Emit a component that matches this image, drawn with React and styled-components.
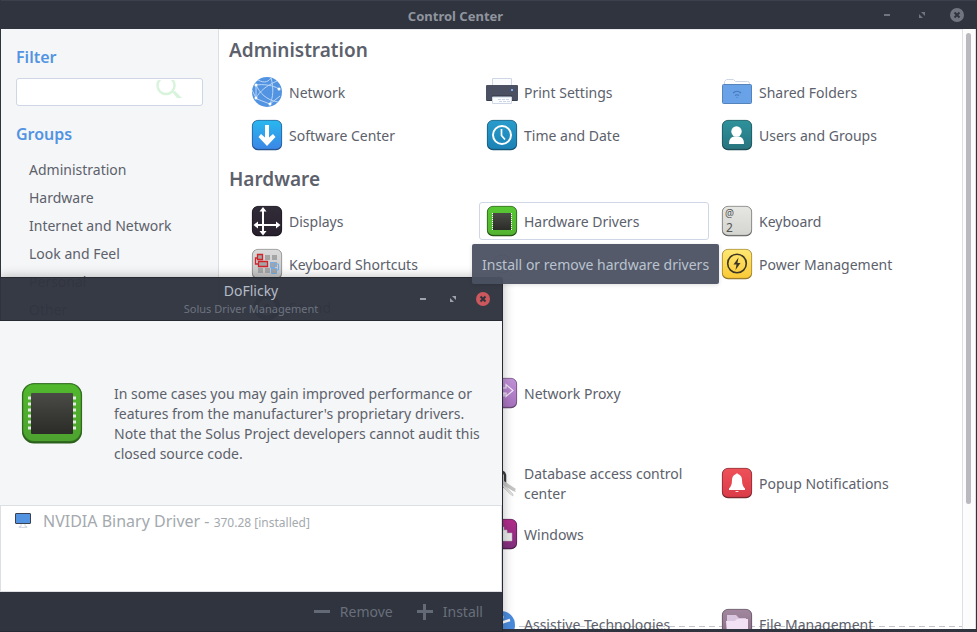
import React from "react";
import styled, { createGlobalStyle } from "styled-components";

const GlobalStyle = createGlobalStyle`
  *, *::before, *::after { box-sizing: border-box; }
  body {
    margin: 0;
    background: #2f343f;
    color: #5c616c;
    font-family: "Noto Sans", "Open Sans", sans-serif;
    font-size: 14px;
    line-height: 20px;
  }
  button, input { font: inherit; color: inherit; }
  h1, h2, p, ul { margin: 0; padding: 0; }
`;

/* ---------- main window ---------- */

const Desktop = styled.div`
  position: relative;
  height: 100vh;
  overflow: hidden;
`;

const MainWindow = styled.main`
  display: flex;
  flex-direction: column;
  height: 100%;
  padding: 0 1px 3px;
  background: #2f343f;
`;

const TitleBar = styled.header`
  display: grid;
  grid-template-columns: 1fr auto;
  align-items: center;
  flex: none;
  height: 29px;
  padding: 0 11px 0 0;
  border-top: 1px solid #3b404c;
`;

const WindowTitle = styled.h1`
  padding: 2px 0 0 31px;
  text-align: center;
  font-size: 13px;
  font-weight: 700;
  color: #90949e;
`;

const WindowButtons = styled.div`
  display: flex;
  gap: ${(p) => p.$gap};
`;

const WindowButton = styled.button`
  display: flex;
  width: 16px;
  height: 16px;
  padding: 0;
  border: 0;
  background: none;
`;

const Body = styled.div`
  display: flex;
  flex: 1;
  min-height: 0;
`;

const Sidebar = styled.aside`
  flex: none;
  width: 218px;
  padding: 18px 15px 0;
  border-right: 1px solid #dcdfe3;
  background: #f5f6f7;
  overflow: hidden;
`;

const SideHeading = styled.h2`
  display: block;
  color: #5294e2;
  font-size: 16px;
  line-height: 20px;
  font-weight: 600;
`;

const SearchBox = styled.div`
  display: flex;
  align-items: flex-start;
  height: 28px;
  margin: 11px 0 18px;
  padding: 1px 20px 0 8px;
  border: 1px solid #cfd6e6;
  border-radius: 3px;
  background: #fff;
`;

const SearchInput = styled.input`
  flex: 1;
  min-width: 0;
  height: 24px;
  padding: 0;
  border: 0;
  outline: 0;
  background: none;
`;

const GroupList = styled.ul`
  margin-top: 12px;
  list-style: none;
`;

const GroupButton = styled.button`
  display: block;
  width: 100%;
  height: 28px;
  padding: 0 13px;
  border: 0;
  background: none;
  text-align: left;
`;

const Content = styled.div`
  display: flex;
  flex: 1;
  flex-direction: column;
  gap: 10px;
  min-width: 0;
  padding: 5px 10px 0;
  border-top: 1px solid #ebecee;
  background-color: #fff;
  background-image: linear-gradient(90deg, #c4c6c9 60%, transparent 60%);
  background-repeat: repeat-x;
  background-position: 0 calc(100% - 2px);
  background-size: 10px 1px;
  overflow: hidden;
`;

const Section = styled.section`
  flex: none;
`;

const SectionHeading = styled.h2`
  margin-bottom: 9px;
  padding-top: 1px;
  font-size: 19px;
  line-height: 28px;
  font-weight: 600;
`;

const ItemGrid = styled.div`
  display: grid;
  grid-template-columns: repeat(3, minmax(0, 1fr));
  grid-auto-rows: 1fr;
  gap: 5px;
  padding: 0 8px 0 15px;
`;

const ItemButton = styled.button`
  display: flex;
  grid-column: ${(p) => p.$column};
  align-items: center;
  gap: 6px;
  min-height: 38px;
  padding: 1px 6px;
  border: 1px solid ${(p) => (p.$hovered ? "#cfd6e6" : "transparent")};
  border-radius: 3px;
  background: none;
  text-align: left;

  svg { flex: none; }
`;

const ItemLabel = styled.span`
  padding-top: 2px;
`;

const ScrollTrack = styled.div`
  flex: none;
  width: 14px;
  padding: 4px 4px 0 3px;
  border-left: 1px solid #dcdfe3;
  border-right: 1px solid #dcdfe3;
  background: #fcfcfc;
`;

const ScrollThumb = styled.div`
  height: 79%;
  border-radius: 3px;
  background: #b8babf;
`;

/* ---------- tooltip ---------- */

const Tooltip = styled.div`
  position: absolute;
  left: 472px;
  top: 244px;
  z-index: 3;
  height: 40px;
  padding: 0 10px;
  border-radius: 2px;
  background: rgba(75, 81, 98, 0.95);
  box-shadow: 0 1px 4px rgba(0, 0, 0, 0.12);
  color: #bac3cf;
  line-height: 42px;
  white-space: nowrap;
`;

/* ---------- driver dialog ---------- */

const Dialog = styled.section`
  position: absolute;
  left: 0;
  bottom: 0;
  z-index: 2;
  display: flex;
  flex-direction: column;
  width: 503px;
  height: 355px;
  border-right: 1px solid #262a33;
  border-radius: 0 3px 0 0;
  box-shadow: 0 0 12px rgba(0, 0, 0, 0.28);
`;

const DialogBar = styled.header`
  display: grid;
  grid-template-columns: 1fr auto;
  align-items: center;
  flex: none;
  height: 44px;
  padding-right: 11px;
  border-top: 1px solid #262a33;
  border-bottom: 1px solid #262a33;
  border-radius: 0 3px 0 0;
  background: rgba(47, 52, 63, 0.97);
`;

const DialogTitles = styled.div`
  padding: 2px 0 0 87px;
  text-align: center;
`;

const DialogTitle = styled.h2`
  color: #b3bac5;
  font-size: 14px;
  line-height: 18px;
  font-weight: 400;
`;

const DialogSubtitle = styled.p`
  color: #6d7480;
  font-size: 11px;
  line-height: 18px;
`;

const Notice = styled.div`
  display: flex;
  flex: none;
  align-items: center;
  gap: 30px;
  height: 184px;
  padding: 0 12px 0 20px;
  background: #f5f6f7;

  svg { flex: none; }
`;

const NoticeText = styled.p`
  padding-top: 22px;
`;

const DriverList = styled.ul`
  flex: 1;
  border: 1px solid #dcdfe3;
  background: #fff;
  list-style: none;
`;

const DriverRow = styled.li`
  display: flex;
  align-items: center;
  gap: 11px;
  height: 30px;
  padding: 0 13px;
  color: #a4a9ae;
  font-size: 16px;

  span { padding-top: 2px; }
  small { font-size: 12px; }
`;

const DialogFooter = styled.footer`
  display: flex;
  flex: none;
  justify-content: flex-end;
  gap: 24px;
  height: 40px;
  padding-right: 19px;
  border-bottom: 1px solid #262a33;
  background: #2f343f;
`;

const FooterButton = styled.button`
  display: flex;
  align-items: center;
  gap: 10px;
  padding: 0;
  border: 0;
  background: none;
  color: #696f7a;
`;

/* ---------- icons ---------- */

function Tile({ id, from, to, edge, children, size = 32 }) {
  return (
    <svg width={size} height={size} viewBox="0 0 32 32" aria-hidden="true">
      <defs>
        <linearGradient id={id} x1="0" y1="0" x2="0" y2="1">
          <stop offset="0" stopColor={from} />
          <stop offset="1" stopColor={to} />
        </linearGradient>
      </defs>
      <rect x="1" y="1.200" width="30" height="30" rx="6" fill={edge} />
      <rect x="1.300" y="1.300" width="29.400" height="29" rx="5.800" fill={`url(#${id})`} stroke={edge} strokeWidth="0.700" strokeOpacity="0.700" />
      {children}
    </svg>
  );
}

const NetworkIcon = () => (
  <svg width="32" height="32" viewBox="0 0 32 32" aria-hidden="true">
    <circle cx="16" cy="16" r="15" fill="#5294e2" />
    <g fill="none" stroke="#bcd6f5" strokeWidth="1">
      <path d="M5 9C12 8 22 9 28 13M5 22C9 15 15 10 26 5M5 9C9 17 15 24 27 26M20 2C23 12 22 22 19 28M5 9L5 22M6 23L19 28L29 20M7 4C14 8 18 5 20 2M1 14L5 22" />
    </g>
    <g fill="#fff">
      <circle cx="5" cy="9" r="1.500" /><circle cx="28" cy="13" r="1.500" />
      <circle cx="5" cy="22" r="1.500" /><circle cx="19" cy="28" r="1.500" />
    </g>
  </svg>
);

const SoftwareIcon = () => (
  <Tile id="software" from="#28b8ef" to="#3c86e6" edge="#234e86">
    <path d="M14 6h4v12.500l4-3.500 2.500 3L16 27l-8.500-9 2.500-3 4 3.500z" fill="#fff" />
  </Tile>
);

const PrinterIcon = () => (
  <svg width="32" height="32" viewBox="0 0 32 32" aria-hidden="true">
    <path d="M6.500 9V2.500h19V9" fill="#fbfcfd" stroke="#cfd6e6" />
    <rect y="9" width="32" height="16" rx="1" fill="#4b5162" />
    <path d="M1 24.500h30" stroke="#393e4b" />
    <rect x="25" y="13" width="2" height="2" fill="#7caeea" />
    <path d="M6 20h20" stroke="#2f343f" />
    <path d="M6.500 21v6.500h19V21z" fill="#fbfcfd" stroke="#cfd6e6" />
    <path d="M12 23.500h12M13 25.500h11" stroke="#cfd6e6" strokeDasharray="3 1" />
  </svg>
);

const ClockIcon = () => (
  <Tile id="clock" from="#289ccc" to="#1b82b5" edge="#17506e">
    <circle cx="16" cy="16" r="9" fill="none" stroke="#fff" strokeWidth="2" />
    <path d="M15.500 10v6.500l3.500 4" fill="none" stroke="#fff" strokeWidth="1.700" />
  </Tile>
);

const SharedIcon = () => (
  <svg width="32" height="32" viewBox="0 0 32 32" aria-hidden="true">
    <path d="M3.500 9V5.500L5.500 3.500h7l2 2h12q2 0 2 2V9" fill="#fdfdfe" stroke="#cfd6e6" />
    <rect x="1.500" y="8.500" width="29" height="19" rx="1" fill="#6aa2e8" stroke="#5584bd" />
    <path d="M12 17q4-3.500 8 0M14 19.500q2-1.500 4 0" fill="none" stroke="#4679ba" strokeWidth="1.200" />
    <path d="M15 21h2l-1 1z" fill="#4679ba" />
  </svg>
);

const UsersIcon = () => (
  <Tile id="users" from="#2e929b" to="#27747f" edge="#1c4a50">
    <circle cx="15.500" cy="12.500" r="5.200" fill="#fff" />
    <path d="M8 25q0-7 5-7.500h5q5 .5 5 7.500z" fill="#fff" />
  </Tile>
);

const DisplaysIcon = () => (
  <Tile id="displays" from="#302c38" to="#29212e" edge="#1a171f">
    <path d="M12 5v23M5 20h23" stroke="#fff" strokeWidth="2" />
    <path d="M12 2l3.500 4.500h-7zM12 30.500l3.500-4.500h-7zM2.500 20l4.500-3.500v7zM29.500 20l-4.500-3.500v7z" fill="#fff" />
  </Tile>
);

const ShortcutsIcon = () => (
  <Tile id="shortcuts" from="#dadada" to="#c6c6c6" edge="#7d7d7d">
    <path d="M7 7h5v5H7zM14 7h5v5h-5zM21 7h5v5h-5zM8 14h9v5H8zM19 14h7v5h-7zM7 20h5v5H7zM14 20h5v5h-5zM20 20h5v5h-5z" fill="#a5a5a5" />
    <path d="M6.500 6.500h5v5h-5zM7.500 13.500h9v5h-9zM6.500 10H4.500v6h3" fill="none" stroke="#d2232b" strokeWidth="1.300" />
    <path d="M19.500 14.500h4v5h-4zM20.500 20.500h5v5h-5zM23.500 16h4v6h-2" fill="none" stroke="#72ace9" />
  </Tile>
);

const SoundIcon = () => (
  <svg width="32" height="32" viewBox="0 0 32 32" aria-hidden="true">
    <circle cx="16" cy="16" r="11" fill="none" stroke="#5c616c" strokeWidth="5" />
    <circle cx="16" cy="16" r="3" fill="#5c616c" />
  </svg>
);

const MouseIcon = () => (
  <svg width="32" height="32" viewBox="0 0 32 32" aria-hidden="true">
    <circle cx="16" cy="16" r="9" fill="none" stroke="#aaaeb6" />
    <path d="M16 11v5" stroke="#aaaeb6" strokeWidth="2" />
  </svg>
);

const PINS = [8, 11, 14, 17, 20, 23];

const LargeChipIcon = () => (
  <Tile id="chip-large" from="#51b92d" to="#4da22f" edge="#2c611c" size={64}>
    <linearGradient id="chip-large-core" x1="0" y1="0" x2="0" y2="1">
      <stop offset="0" stopColor="#4a4a47" />
      <stop offset="1" stopColor="#2b2c27" />
    </linearGradient>
    {PINS.map((y) => (
      <path key={y} d={`M4 ${y + 0.5}h24`} stroke="#e1eedd" strokeWidth="1.500" />
    ))}
    <rect x="5.500" y="6" width="21" height="20.500" rx="0.500" fill="url(#chip-large-core)" />
  </Tile>
);

const SmallChipIcon = () => (
  <Tile id="chip" from="#58c833" to="#53b331" edge="#1f4a12">
    <linearGradient id="chip-core" x1="0" y1="0" x2="0" y2="1">
      <stop offset="0" stopColor="#4a4a47" />
      <stop offset="1" stopColor="#2b2c27" />
    </linearGradient>
    <path d="M6.500 8v17M25.500 8v17" stroke="#fff" strokeDasharray="1 1" />
    <rect x="7" y="8" width="18" height="17" fill="url(#chip-core)" />
  </Tile>
);

const KeyboardIcon = () => (
  <Tile id="keyboard" from="#e6e6e2" to="#d4d4d0" edge="#60615f">
    <text x="4" y="12" fontSize="10" fill="#555654">@</text>
    <text x="5" y="27" fontSize="12" fill="#555654">2</text>
  </Tile>
);

const PowerIcon = () => (
  <Tile id="power" from="#ffe873" to="#f9c936" edge="#8c722a">
    <circle cx="16" cy="15.500" r="9.300" fill="none" stroke="#3c3727" strokeWidth="1.600" />
    <path d="M17.500 9.500l-5 7h3l-1 5.500 5-7h-3z" fill="#3c3727" />
  </Tile>
);

const ProxyIcon = () => (
  <Tile id="proxy" from="#c293d8" to="#a671bd" edge="#5f4469">
    <path d="M5 11h15V7.500l7 6-7 6V16H5" fill="none" stroke="#f4e9f8" strokeWidth="1.200" />
    <path d="M18 16v3.500" fill="none" stroke="#f4e9f8" strokeWidth="1.200" />
  </Tile>
);

const KeysIcon = () => (
  <svg width="32" height="32" viewBox="0 0 32 32" aria-hidden="true">
    <path d="M10 5q8-2 9 3v10q-2 3-6 2" fill="none" stroke="#3a3c3d" strokeWidth="2.500" />
    <path d="M18 14l12 8-1 1 1 2-3-1-10-6z" fill="#c4c5c3" />
    <path d="M17 17l10 10v2l-3-2-9-9z" fill="#e0e0de" stroke="#bbb" strokeWidth="0.500" />
  </svg>
);

const BellIcon = () => (
  <Tile id="bell" from="#ef5159" to="#da3b47" edge="#6f252b">
    <path d="M15 7q1-1.500 2 0 4 1.500 4 6 0 6 3 8.500v1.500H8v-1.500Q11 19 11 13q0-4.500 4-6zM14 24h4q-2 2-4 0z" fill="#fff" />
  </Tile>
);

const WindowsIcon = () => (
  <Tile id="windows" from="#b52c8b" to="#81307f" edge="#4c1d4a">
    <path d="M5 8h11v13H5z" fill="#c9c2c8" />
    <path d="M12 9h6v4h3v9H12z" fill="#dcdadc" stroke="#a79da6" strokeWidth="0.500" />
    <path d="M16 12h5v3h5v8H16z" fill="#e9e9e9" stroke="#b9b2b8" strokeWidth="0.500" />
  </Tile>
);

const AccessIcon = () => (
  <svg width="32" height="32" viewBox="0 0 32 32" aria-hidden="true">
    <circle cx="15" cy="17" r="14" fill="#4a8bdc" />
    <path d="M6 13l9 2 9-3M15 15v7l-4 7M15 22l4 7" fill="none" stroke="#fff" strokeWidth="2.500" />
    <circle cx="15" cy="9" r="2.500" fill="#fff" />
  </svg>
);

const FilesIcon = () => (
  <Tile id="files" from="#a2889f" to="#846b83" edge="#594a5a">
    <path d="M6 7h9l3 3h7v6H6z" fill="#d9c6de" />
    <path d="M5 13h9l2-2h11v14H6z" fill="#f2e1f5" />
  </Tile>
);

const SearchIcon = () => (
  <svg width="26" height="18" viewBox="0 0 26 18" aria-hidden="true">
    <circle cx="10" cy="5.500" r="8.500" fill="none" stroke="#d9f4dc" strokeWidth="2.500" />
    <path d="M16 12l3-1 7 7h-5z" fill="#d9f4dc" />
  </svg>
);

const MonitorIcon = () => (
  <svg width="18" height="18" viewBox="0 0 18 18" aria-hidden="true">
    <rect x="1.500" y="1.500" width="15" height="10" rx="0.500" fill="#5294e2" stroke="#3a4252" />
    <path d="M7 12v2.500H5v1h8v-1h-2V12" fill="none" stroke="#d3d8e2" />
  </svg>
);

const MinimizeGlyph = () => (
  <svg width="16" height="16" viewBox="0 0 16 16" aria-hidden="true">
    <path d="M5 8h6" stroke="currentColor" strokeWidth="2" />
  </svg>
);

const MaximizeGlyph = () => (
  <svg width="16" height="16" viewBox="0 0 16 16" aria-hidden="true">
    <path d="M7 5h4v4zM5 7v4h4z" fill="currentColor" />
  </svg>
);

const CloseGlyph = ({ fill }) => (
  <svg width="16" height="16" viewBox="0 0 16 16" aria-hidden="true">
    <circle cx="8" cy="8" r="7" fill={fill} />
    <path d="M5.500 5.500l5 5M10.500 5.500l-5 5" stroke="#2f343f" strokeWidth="2" />
  </svg>
);

const MinusGlyph = () => (
  <svg width="16" height="16" viewBox="0 0 16 16" aria-hidden="true">
    <path d="M0 7.500h16" stroke="#646a75" strokeWidth="3" />
  </svg>
);

const PlusGlyph = () => (
  <svg width="16" height="16" viewBox="0 0 16 16" aria-hidden="true">
    <path d="M0 7.500h16M7.500 0v16" stroke="#646a75" strokeWidth="3" />
  </svg>
);

/* ---------- data ---------- */

const GROUPS = ["Administration", "Hardware", "Internet and Network", "Look and Feel", "Personal", "Other"];

const SECTIONS = [
  {
    title: "Administration",
    items: [
      { label: "Network", icon: NetworkIcon, column: 1 },
      { label: "Print Settings", icon: PrinterIcon, column: 2 },
      { label: "Shared Folders", icon: SharedIcon, column: 3 },
      { label: "Software Center", icon: SoftwareIcon, column: 1 },
      { label: "Time and Date", icon: ClockIcon, column: 2 },
      { label: "Users and Groups", icon: UsersIcon, column: 3 },
    ],
  },
  {
    title: "Hardware",
    items: [
      { label: "Displays", icon: DisplaysIcon, column: 1 },
      { label: "Hardware Drivers", icon: SmallChipIcon, column: 2, hovered: true },
      { label: "Keyboard", icon: KeyboardIcon, column: 3 },
      { label: "Keyboard Shortcuts", icon: ShortcutsIcon, column: 1 },
      { label: "Mouse", icon: MouseIcon, column: 2 },
      { label: "Power Management", icon: PowerIcon, column: 3 },
      { label: "Sound", icon: SoundIcon, column: 1 },
    ],
  },
  {
    title: "Internet and Network",
    items: [{ label: "Network Proxy", icon: ProxyIcon, column: 2 }],
  },
  {
    title: "Look and Feel",
    items: [
      { label: "Database access control center", icon: KeysIcon, column: 2 },
      { label: "Popup Notifications", icon: BellIcon, column: 3 },
      { label: "Windows", icon: WindowsIcon, column: 2 },
    ],
  },
  {
    title: "Personal",
    items: [
      { label: "Assistive Technologies", icon: AccessIcon, column: 2 },
      { label: "File Management", icon: FilesIcon, column: 3 },
    ],
  },
];

function Controls({ gap, close }) {
  return (
    <WindowButtons $gap={gap}>
      <WindowButton aria-label="Minimize"><MinimizeGlyph /></WindowButton>
      <WindowButton aria-label="Maximize"><MaximizeGlyph /></WindowButton>
      <WindowButton aria-label="Close"><CloseGlyph fill={close} /></WindowButton>
    </WindowButtons>
  );
}

const MainControls = styled.div`
  color: #70757f;
`;

const DialogControls = styled.div`
  color: #9da3ad;
`;

export default function App() {
  return (
    <Desktop>
      <GlobalStyle />
      <MainWindow>
        <TitleBar>
          <WindowTitle>Control Center</WindowTitle>
          <MainControls><Controls gap="19px" close="#70757f" /></MainControls>
        </TitleBar>
        <Body>
          <Sidebar>
            <SideHeading as="label" htmlFor="filter">Filter</SideHeading>
            <SearchBox>
              <SearchInput id="filter" type="text" />
              <SearchIcon />
            </SearchBox>
            <SideHeading>Groups</SideHeading>
            <GroupList>
              {GROUPS.map((name) => (
                <li key={name}><GroupButton>{name}</GroupButton></li>
              ))}
            </GroupList>
          </Sidebar>
          <Content>
            {SECTIONS.map((section) => (
              <Section key={section.title}>
                <SectionHeading>{section.title}</SectionHeading>
                <ItemGrid>
                  {section.items.map(({ label, icon: Icon, column, hovered }) => (
                    <ItemButton key={label} $column={column} $hovered={hovered} aria-describedby={hovered ? "driver-tip" : undefined}>
                      <Icon />
                      <ItemLabel>{label}</ItemLabel>
                    </ItemButton>
                  ))}
                </ItemGrid>
              </Section>
            ))}
          </Content>
          <ScrollTrack><ScrollThumb /></ScrollTrack>
        </Body>
      </MainWindow>

      <Dialog role="dialog" aria-labelledby="dialog-title">
        <DialogBar>
          <DialogTitles>
            <DialogTitle id="dialog-title">DoFlicky</DialogTitle>
            <DialogSubtitle>Solus Driver Management</DialogSubtitle>
          </DialogTitles>
          <DialogControls><Controls gap="14px" close="#cc575d" /></DialogControls>
        </DialogBar>
        <Notice>
          <LargeChipIcon />
          <NoticeText>
            In some cases you may gain improved performance or features from the manufacturer's
            proprietary drivers. Note that the Solus Project developers cannot audit this closed
            source code.
          </NoticeText>
        </Notice>
        <DriverList>
          <DriverRow>
            <MonitorIcon />
            <span>NVIDIA Binary Driver - <small>370.28 [installed]</small></span>
          </DriverRow>
        </DriverList>
        <DialogFooter>
          <FooterButton disabled><MinusGlyph />Remove</FooterButton>
          <FooterButton disabled><PlusGlyph />Install</FooterButton>
        </DialogFooter>
      </Dialog>

      <Tooltip id="driver-tip" role="tooltip">Install or remove hardware drivers</Tooltip>
    </Desktop>
  );
}
